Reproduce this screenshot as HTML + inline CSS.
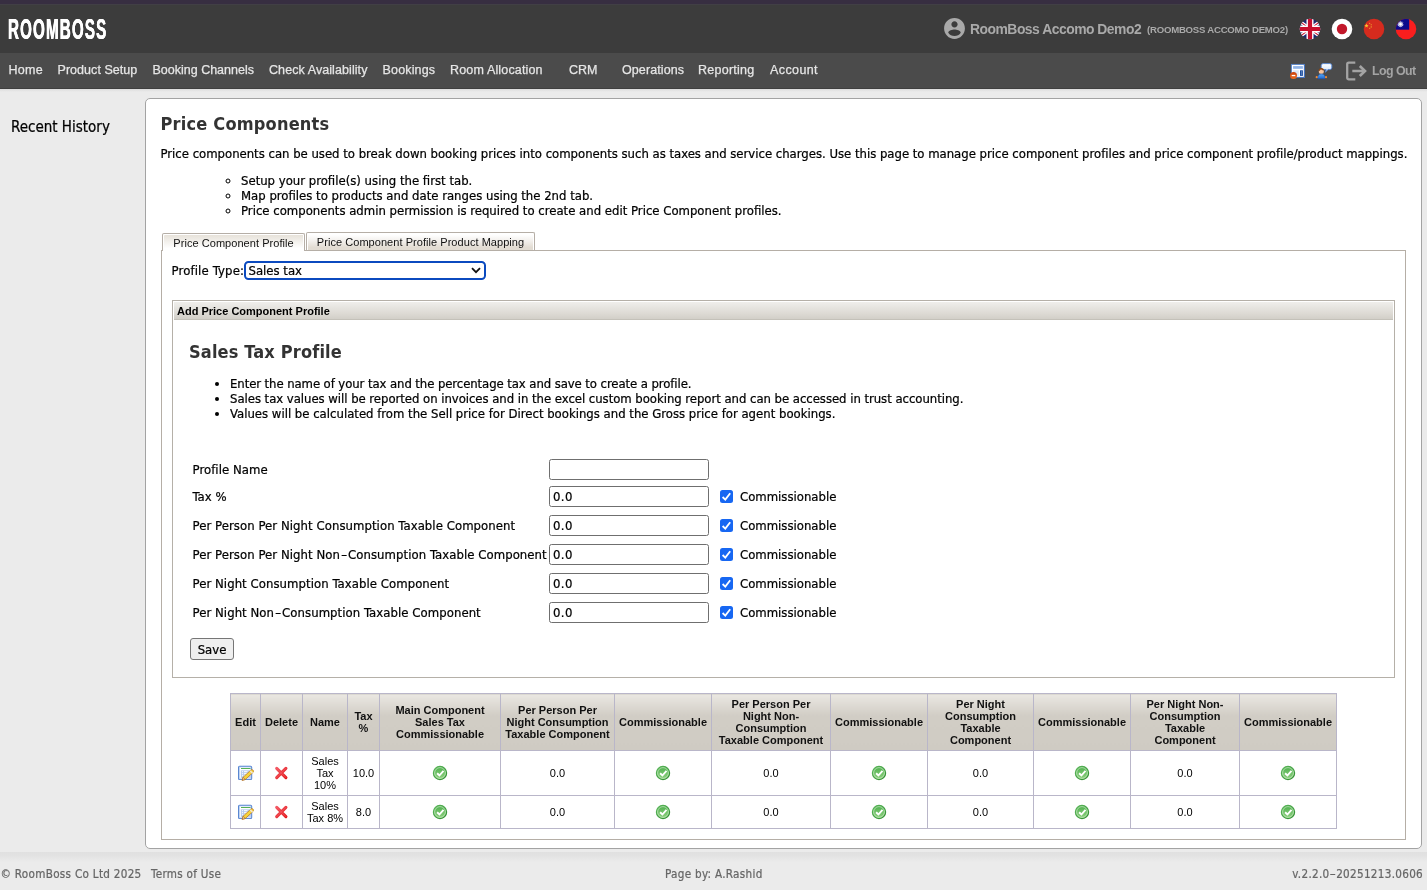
<!DOCTYPE html>
<html lang="en">
<head>
<meta charset="utf-8">
<title>RoomBoss - Price Components</title>
<style>
*{box-sizing:border-box}
html,body{margin:0;padding:0}
body{will-change:transform;width:1427px;height:890px;overflow:hidden;background:#ebebeb;position:relative;
 font-family:"DejaVu Sans Condensed","DejaVu Sans",sans-serif;font-stretch:condensed;font-size:13px;color:#000;line-height:15px;-webkit-text-stroke:.22px}
.lib,#tbl,.tab,#innerhd,#logo,h1,h2{-webkit-text-stroke:0}
.abs{position:absolute}
#strip{left:0;top:0;width:1427px;height:4px;background:#372e41}
#hdr{left:0;top:4px;width:1427px;height:49px;background:#3c3c3c;border-top:1px solid #413f45}
#nav{left:0;top:53px;width:1427px;height:36px;background:#4b4b4b;border-bottom:1px solid #3f3f3f}
#navsh{left:0;top:89px;width:1427px;height:3px;background:linear-gradient(#dcdcdc,#ebebeb)}
#ftsh{left:0;top:852px;width:1427px;height:10px;background:linear-gradient(#e0e0e0,#e2e2e2 35%,#ebebeb)}
.lib{font-family:"Liberation Sans",sans-serif;font-stretch:normal}
#logo{left:8.300px;top:12.800px;font-family:"Liberation Sans",sans-serif;font-stretch:normal;font-weight:bold;font-size:29.500px;line-height:32px;color:#fff;transform-origin:0 0;transform:scaleX(.515);text-shadow:0.35px 0 0 #fff,-0.35px 0 0 #fff;letter-spacing:2.200px;white-space:nowrap}
.navi{top:62px;font-family:"Liberation Sans",sans-serif;font-stretch:normal;font-size:12.5px;line-height:16px;color:#e6e6e6;white-space:nowrap;-webkit-text-stroke:.25px #e6e6e6}
#panel{left:145px;top:98px;width:1277px;height:751px;background:#fff;border:1px solid #a3a3a3;border-radius:5px}

h1,h2{margin:0;font-weight:bold;font-size:18px;line-height:22px;color:#333;white-space:nowrap;letter-spacing:.28px}
.t{white-space:nowrap}
.tab{letter-spacing:.05px;top:233px;height:18px;border:1px solid #b5aea6;border-bottom:none;box-shadow:inset 1px 1px 0 #fff,inset -1px 0 0 #fff;border-radius:2px 2px 0 0;font-family:"Liberation Sans",sans-serif;font-stretch:normal;font-size:11px;line-height:17px;text-align:center;color:#111;white-space:nowrap}
#tabpanel{left:161px;top:250px;width:1245px;height:590px;border:1px solid #b5aea6;background:#fff}
#inner{left:172px;top:300px;width:1223px;height:378px;border:1px solid #b5b0a8;background:#fff}
#innerhd{left:174px;top:302px;width:1219px;height:18px;background:linear-gradient(#efeeeb,#dcd9d3 70%,#d2cfc8);border-bottom:1px solid #c4c1b9;font-family:"Liberation Sans",sans-serif;font-stretch:normal;font-weight:bold;font-size:11px;line-height:18px;padding-left:3px;color:#000}
.lbl{left:192.500px;white-space:nowrap;line-height:16px;letter-spacing:.06px}
.hy{display:inline-block;transform:scaleX(1.500);margin:0 1.900px}
.inp{left:549px;width:160px;height:21px;border:1px solid #6f6f6f;border-radius:2.500px;background:#fff;padding-left:3px;letter-spacing:.4px;line-height:19px;font-size:13px}
.cb{left:720px;width:13px;height:13px;border-radius:2.500px;background:#1767f2}
.cl{left:740px;white-space:nowrap;line-height:16px}

#tbl{left:230px;top:693px;border-collapse:collapse;table-layout:fixed;font-family:"Liberation Sans",sans-serif;font-stretch:normal;font-size:11px;line-height:12px;color:#000}
#tbl th,#tbl td{border:1px solid #b9b6c9;padding:0;text-align:center;vertical-align:middle}
#tbl th{font-weight:bold;background:linear-gradient(#eae7e2,#d1cdc5 38%,#cfcbc3);height:57px;color:#111}
#tbl td{background:#fff}
#tbl svg{display:block;margin:0 auto}
.ft{top:867px;font-size:11.6px;letter-spacing:.3px;line-height:15px;color:#666;white-space:nowrap}
.nocond,.nocond .t,.nocond .lbl,.nocond .cl,.nocond .ft{font-family:"Liberation Sans",sans-serif;font-stretch:normal}
.nocond{font-size:13.200px}
.nocond .lbl{letter-spacing:-.12px}
.nocond .hy{margin:0 .5px}
.nocond h1,.nocond h2{font-family:"Liberation Sans",sans-serif;font-stretch:normal;font-size:19px}
</style>
</head>
<body>
<div id="strip" class="abs"></div>
<div id="hdr" class="abs"></div>
<div id="nav" class="abs"></div>
<div id="navsh" class="abs"></div>
<div id="ftsh" class="abs"></div>
<div id="logo" class="abs">ROOMBOSS</div>

<div class="abs navi" style="left:8.500px;letter-spacing:.3px">Home</div>
<div class="abs navi" style="left:57.500px;letter-spacing:.05px">Product Setup</div>
<div class="abs navi" style="left:152.500px">Booking Channels</div>
<div class="abs navi" style="left:269px;letter-spacing:.08px">Check Availability</div>
<div class="abs navi" style="left:382.500px;letter-spacing:.17px">Bookings</div>
<div class="abs navi" style="left:450px;letter-spacing:.16px">Room Allocation</div>
<div class="abs navi" style="left:569px">CRM</div>
<div class="abs navi" style="left:622px;letter-spacing:.1px">Operations</div>
<div class="abs navi" style="left:698px;letter-spacing:.25px">Reporting</div>
<div class="abs navi" style="left:770px;letter-spacing:.4px">Account</div>


<!-- header right -->
<svg class="abs" style="left:942px;top:16.300px" width="25" height="25" viewBox="0 0 24 24"><path fill="#a9a9a9" d="M12 2C6.48 2 2 6.48 2 12s4.48 10 10 10 10-4.480 10-10S17.520 2 12 2zm0 3c1.660 0 3 1.340 3 3s-1.340 3-3 3-3-1.340-3-3 1.340-3 3-3zm0 14.200c-2.500 0-4.710-1.280-6-3.220.030-1.990 4-3.080 6-3.080 1.990 0 5.970 1.090 6 3.080-1.290 1.940-3.500 3.220-6 3.220z"/></svg>
<div class="abs lib" style="left:970px;top:20px;font-weight:bold;font-size:13.900px;line-height:18px;color:#a9a9a9;letter-spacing:-0.5px;white-space:nowrap">RoomBoss Accomo Demo2</div>
<div class="abs lib" style="left:1147px;top:22px;font-weight:bold;font-size:9.6px;line-height:16px;color:#a9a9a9;letter-spacing:-0.23px;white-space:nowrap">(ROOMBOSS ACCOMO DEMO2)</div>

<svg class="abs" style="left:1299px;top:18px" width="22" height="22" viewBox="0 0 22 22">
 <defs><clipPath id="cf"><circle cx="11" cy="11" r="10.3"/></clipPath></defs>
 <g clip-path="url(#cf)">
  <rect width="22" height="22" fill="#1f2a6e"/>
  <path d="M-4 0L26 22M26 0L-4 22" stroke="#fff" stroke-width="3.400"/>
  <path d="M-4 0L26 22M26 0L-4 22" stroke="#c8102e" stroke-width="1.100"/>
  <path d="M11 0V22M0 11H22" stroke="#fff" stroke-width="7"/>
  <path d="M11 0V22M0 11H22" stroke="#c8102e" stroke-width="4.200"/>
 </g>
</svg>
<svg class="abs" style="left:1331px;top:18px" width="22" height="22" viewBox="0 0 22 22">
 <circle cx="11" cy="11" r="10.3" fill="#fff"/><circle cx="11" cy="11" r="5.200" fill="#c2182b"/>
</svg>
<svg class="abs" style="left:1363px;top:18px" width="22" height="22" viewBox="0 0 22 22">
 <circle cx="11" cy="11" r="10.3" fill="#d52b1e"/>
 <polygon fill="#f4c430" points="3.200,6.300 4.000,8.000 5.800,8.100 4.400,9.300 4.900,11.000 3.300,10.000 1.700,11.000 2.200,9.300 0.800,8.100 2.600,8.000" transform="translate(0.700,0.200) scale(.85)"/>
 <circle cx="6.700" cy="5.300" r=".55" fill="#f4c430"/><circle cx="8.200" cy="6.800" r=".55" fill="#f4c430"/><circle cx="8.200" cy="8.900" r=".55" fill="#f4c430"/><circle cx="6.700" cy="10.300" r=".55" fill="#f4c430"/>
</svg>
<svg class="abs" style="left:1395px;top:18px" width="22" height="22" viewBox="0 0 22 22">
 <defs><clipPath id="ct"><circle cx="11" cy="11" r="10.3"/></clipPath></defs>
 <g clip-path="url(#ct)">
  <rect width="22" height="22" fill="#fa1e1e"/>
  <rect width="14.200" height="11.700" fill="#0a0a8c"/>
  <polygon fill="#fff" points="8.900,6.200 7.528,6.744 8.444,7.900 6.985,7.685 7.200,9.144 6.044,8.228 5.500,9.600 4.956,8.228 3.800,9.144 4.015,7.685 2.556,7.900 3.472,6.744 2.100,6.200 3.472,5.656 2.556,4.500 4.015,4.715 3.800,3.256 4.956,4.172 5.500,2.800 6.044,4.172 7.200,3.256 6.985,4.715 8.444,4.500 7.528,5.656"/><circle cx="5.500" cy="6.200" r="1.900" fill="#fff" stroke="#0a0a8c" stroke-width=".35"/>
 </g>
</svg>

<!-- nav right icons -->
<svg class="abs" style="left:1289px;top:63px" width="17" height="17" viewBox="0 0 17 17">
 <rect x="2.400" y="1.400" width="13" height="13" fill="#fff" stroke="#5584cc" stroke-width=".9"/>
 <path d="M2.400 14.400h13v-13" fill="none" stroke="#3f6fbd" stroke-width=".9"/>
 <rect x="4.100" y="3.100" width="9.800" height="2.700" fill="#8fb3e8"/>
 <rect x="4.100" y="7.300" width="5.800" height="5.600" fill="#dbe6f5"/>
 <rect x="11" y="7.300" width="2.900" height="5.600" fill="#1d4f9e"/>
 <rect x="12.100" y="8" width=".8" height="4.200" fill="#5d86c8"/>
 <circle cx="4.500" cy="12.500" r="3.500" fill="url(#rg)"/>
 <rect x="2.700" y="11.900" width="3.600" height="1.300" fill="#fff"/>
</svg>
<svg class="abs" style="left:1315px;top:62px" width="18" height="18" viewBox="0 0 18 18">
 <path d="M8.200 1.600h6.600a2 2 0 0 1 2 2v2a2 2 0 0 1-2 2h-1.700l-2.800 2.600.9-2.600h-3a2 2 0 0 1-2-2v-2a2 2 0 0 1 2-2z" fill="url(#bg)" stroke="#4f82d2" stroke-width=".9"/>
 <circle cx="6.300" cy="9.600" r="2.500" fill="#f6c39c"/>
 <path d="M3.600 9.400c-.3-2.200 1.200-3.600 2.900-3.500 1.500.1 2.600 1 2.700 2.300-1.400.3-2.700-.3-3.300-.9-.5.900-1.300 1.700-2.300 2.100z" fill="#8a4513"/>
 <path d="M2.700 16.800c-.3-3 1-4.900 3.700-4.900s4 1.900 3.700 4.900z" fill="url(#ug)" stroke="#1c4fa8" stroke-width=".5"/>
 <circle cx="1.700" cy="15.200" r="1.100" fill="#ef8a35"/><circle cx="11" cy="15.200" r="1.100" fill="#ef8a35"/>
</svg>
<svg class="abs" style="left:1345px;top:60px" width="23" height="22" viewBox="0 0 23 22">
 <path d="M10.300 2.600H3.800a1.600 1.600 0 0 0-1.600 1.600v13.600a1.600 1.600 0 0 0 1.600 1.600h6.500" fill="none" stroke="#a4a4a4" stroke-width="2.300"/>
 <path d="M7.300 11H18.500" fill="none" stroke="#a4a4a4" stroke-width="2.500"/>
 <path d="M14.800 6l5.200 5-5.200 5" fill="none" stroke="#a4a4a4" stroke-width="2.600"/>
</svg>
<div class="abs lib" style="left:1372px;top:62.600px;font-weight:bold;font-size:12.400px;line-height:16px;color:#a4a4a4;letter-spacing:-0.55px;white-space:nowrap">Log Out</div>

<div class="abs" style="left:11px;top:117.700px;font-size:15px;line-height:18px;color:#000">Recent History</div>

<div id="panel" class="abs"></div>

<h1 class="abs" style="left:160.500px;top:113px;letter-spacing:.2px">Price Components</h1>
<div class="abs t" style="left:160.500px;top:146px;letter-spacing:-.013px">Price components can be used to break down booking prices into components such as taxes and service charges. Use this page to manage price component profiles and price component profile/product mappings.</div>
<ul class="abs" style="left:201px;top:173px;margin:0;padding:0 0 0 40px;list-style:circle">
 <li class="t">Setup your profile(s) using the first tab.</li>
 <li class="t">Map profiles to products and date ranges using the 2nd tab.</li>
 <li class="t">Price components admin permission is required to create and edit Price Component profiles.</li>
</ul>

<div id="tabpanel" class="abs"></div>
<div class="abs tab" style="left:162px;width:143px;background:linear-gradient(#e5e0d7,#fff 85%);height:18px;top:233px;z-index:2;line-height:19px">Price Component Profile</div>
<div class="abs tab" style="left:306px;width:229px;top:232px;height:18px;background:linear-gradient(#fff 10%,#f1eeea 50%,#e2dcd3 85%);line-height:19px">Price Component Profile Product Mapping</div>

<div class="abs t" style="left:171.500px;top:263px;letter-spacing:.15px">Profile Type:</div>
<div class="abs" style="left:244px;top:261px;width:242px;height:19px;border:2px solid #0b4abf;border-radius:4.500px;background:#fff;padding-left:2.500px;line-height:15px;white-space:nowrap">Sales tax
 <svg class="abs" style="right:3px;top:4px" width="10" height="7" viewBox="0 0 10 7"><path d="M1 1.200l4 4 4-4" fill="none" stroke="#111" stroke-width="1.800"/></svg>
</div>

<div id="inner" class="abs"></div>
<div id="innerhd" class="abs">Add Price Component Profile</div>
<h2 class="abs" style="left:189px;top:341px;letter-spacing:.16px">Sales Tax Profile</h2>
<ul class="abs" style="left:190px;top:376px;margin:0;padding:0 0 0 40px;list-style:disc">
 <li class="t" style="letter-spacing:-.085px">Enter the name of your tax and the percentage tax and save to create a profile.</li>
 <li class="t" style="letter-spacing:-.04px">Sales tax values will be reported on invoices and in the excel custom booking report and can be accessed in trust accounting.</li>
 <li class="t">Values will be calculated from the Sell price for Direct bookings and the Gross price for agent bookings.</li>
</ul>
<div class="abs lbl" style="top:462px">Profile Name</div><div class="abs inp" style="top:459px"></div>
<div class="abs lbl" style="top:489px">Tax %</div><div class="abs inp" style="top:486px">0.0</div>
<div class="abs cb" style="top:490px"><svg width="13" height="13" viewBox="0 0 13 13" style="display:block"><path d="M2.600 7l2.700 2.600 4.900-6.300" fill="none" stroke="#fff" stroke-width="1.800"/></svg></div><div class="abs cl" style="top:489px">Commissionable</div>
<div class="abs lbl" style="top:518px">Per Person Per Night Consumption Taxable Component</div><div class="abs inp" style="top:515px">0.0</div>
<div class="abs cb" style="top:519px"><svg width="13" height="13" viewBox="0 0 13 13" style="display:block"><path d="M2.600 7l2.700 2.600 4.900-6.300" fill="none" stroke="#fff" stroke-width="1.800"/></svg></div><div class="abs cl" style="top:518px">Commissionable</div>
<div class="abs lbl" style="top:547px">Per Person Per Night Non<span class="hy">-</span>Consumption Taxable Component</div><div class="abs inp" style="top:544px">0.0</div>
<div class="abs cb" style="top:548px"><svg width="13" height="13" viewBox="0 0 13 13" style="display:block"><path d="M2.600 7l2.700 2.600 4.900-6.300" fill="none" stroke="#fff" stroke-width="1.800"/></svg></div><div class="abs cl" style="top:547px">Commissionable</div>
<div class="abs lbl" style="top:576px">Per Night Consumption Taxable Component</div><div class="abs inp" style="top:573px">0.0</div>
<div class="abs cb" style="top:577px"><svg width="13" height="13" viewBox="0 0 13 13" style="display:block"><path d="M2.600 7l2.700 2.600 4.900-6.300" fill="none" stroke="#fff" stroke-width="1.800"/></svg></div><div class="abs cl" style="top:576px">Commissionable</div>
<div class="abs lbl" style="top:605px">Per Night Non<span class="hy">-</span>Consumption Taxable Component</div><div class="abs inp" style="top:602px">0.0</div>
<div class="abs cb" style="top:606px"><svg width="13" height="13" viewBox="0 0 13 13" style="display:block"><path d="M2.600 7l2.700 2.600 4.900-6.300" fill="none" stroke="#fff" stroke-width="1.800"/></svg></div><div class="abs cl" style="top:605px">Commissionable</div>
<div class="abs" style="left:190px;top:638px;width:44px;height:22px;border:1px solid #767676;border-radius:3px;background:#efefef;text-align:center;line-height:21.400px;color:#000">Save</div>

<svg class="abs" width="0" height="0" style="left:0;top:0"><defs>
<linearGradient id="tg" x1="0" y1="0" x2="0" y2="1"><stop offset="0" stop-color="#4caf4c"/><stop offset="1" stop-color="#93d283"/></linearGradient>
<linearGradient id="ts" x1="0" y1="0" x2="1" y2="1"><stop offset="0" stop-color="#5cb85c"/><stop offset="1" stop-color="#2e8b2e"/></linearGradient>
<linearGradient id="xg" gradientUnits="userSpaceOnUse" x1="2" y1="2" x2="14" y2="14"><stop offset="0" stop-color="#f45a66"/><stop offset="1" stop-color="#e00d0d"/></linearGradient>
<linearGradient id="rg" x1="0" y1="0" x2="0" y2="1"><stop offset="0" stop-color="#c9400d"/><stop offset="1" stop-color="#ee6a1c"/></linearGradient>
<linearGradient id="bg" x1="0" y1="0" x2="0" y2="1"><stop offset="0" stop-color="#ffffff"/><stop offset="1" stop-color="#cfe0fa"/></linearGradient>
<linearGradient id="ug" x1="0" y1="0" x2="0" y2="1"><stop offset="0" stop-color="#58a8f2"/><stop offset="1" stop-color="#1f66d0"/></linearGradient>
</defs></svg>
<table id="tbl" class="abs"><colgroup><col style="width:30px"><col style="width:42px"><col style="width:45px"><col style="width:32px"><col style="width:121px"><col style="width:114px"><col style="width:97px"><col style="width:119px"><col style="width:97px"><col style="width:106px"><col style="width:97px"><col style="width:109px"><col style="width:97px"></colgroup>
<tr><th>Edit</th><th>Delete</th><th>Name</th><th>Tax<br>%</th><th>Main Component<br>Sales Tax<br>Commissionable</th><th>Per Person Per<br>Night Consumption<br>Taxable Component</th><th>Commissionable</th><th>Per Person Per<br>Night Non-<br>Consumption<br>Taxable Component</th><th>Commissionable</th><th>Per Night<br>Consumption<br>Taxable<br>Component</th><th>Commissionable</th><th>Per Night Non-<br>Consumption<br>Taxable<br>Component</th><th>Commissionable</th></tr>
<tr style="height:45px"><td><svg width="16" height="16" viewBox="0 0 16 16"><rect x=".6" y="1.300" width="13" height="13.200" rx="1" fill="#fff" stroke="#4f7fcf" stroke-width="1.200"/><rect x="1.300" y="2" width="11.600" height="11.800" fill="none" stroke="#b6cdf0" stroke-width=".8"/><path d="M3 3.500h9.500" stroke="#55b055" stroke-width="1"/><rect x="2.800" y="5.300" width="10" height="7.600" fill="#b7ccee"/><path d="M4 6.700h1M6 6.700h3.500M4 8.700h1M6 8.700h3.500M4 10.700h1M6 10.700h3.500" stroke="#fff" stroke-width="1"/><path d="M4.200 15.300l.9-3 8-7.400a1.300 1.300 0 0 1 1.800.1l.4.500a1.300 1.300 0 0 1-.1 1.800l-8 7.300z" fill="#f6d43a" stroke="#c27a1e" stroke-width=".8"/><path d="M12.200 5.700l2.300 2.500" stroke="#f4e6d0" stroke-width="1.600"/><path d="M4.200 15.300l.9-3 2.100 2.100z" fill="#f3d9b5" stroke="#9a5a16" stroke-width=".6"/></svg></td><td><svg width="16" height="16" viewBox="0 0 16 16"><path d="M2.700 3.400l9.200 9.200M11.900 3.400L2.700 12.600" fill="none" stroke="url(#xg)" stroke-width="3.100" stroke-linecap="round"/><path d="M2.700 3.400l9.200 9.200M11.900 3.400L2.700 12.600" fill="none" stroke="#f56a72" stroke-width="1" stroke-linecap="round" opacity=".55"/></svg></td><td>Sales<br>Tax<br>10%</td><td>10.0</td><td><svg width="16" height="16" viewBox="0 0 16 16"><circle cx="8" cy="8" r="6.600" fill="url(#tg)" stroke="url(#ts)" stroke-width="1.200"/><circle cx="8" cy="8" r="5.400" fill="none" stroke="#c9ebc4" stroke-width=".7"/><path d="M5.100 8.300l2.300 2.200 4.100-4.700" fill="none" stroke="#fff" stroke-width="1.900"/></svg></td><td>0.0</td><td><svg width="16" height="16" viewBox="0 0 16 16"><circle cx="8" cy="8" r="6.600" fill="url(#tg)" stroke="url(#ts)" stroke-width="1.200"/><circle cx="8" cy="8" r="5.400" fill="none" stroke="#c9ebc4" stroke-width=".7"/><path d="M5.100 8.300l2.300 2.200 4.100-4.700" fill="none" stroke="#fff" stroke-width="1.900"/></svg></td><td>0.0</td><td><svg width="16" height="16" viewBox="0 0 16 16"><circle cx="8" cy="8" r="6.600" fill="url(#tg)" stroke="url(#ts)" stroke-width="1.200"/><circle cx="8" cy="8" r="5.400" fill="none" stroke="#c9ebc4" stroke-width=".7"/><path d="M5.100 8.300l2.300 2.200 4.100-4.700" fill="none" stroke="#fff" stroke-width="1.900"/></svg></td><td>0.0</td><td><svg width="16" height="16" viewBox="0 0 16 16"><circle cx="8" cy="8" r="6.600" fill="url(#tg)" stroke="url(#ts)" stroke-width="1.200"/><circle cx="8" cy="8" r="5.400" fill="none" stroke="#c9ebc4" stroke-width=".7"/><path d="M5.100 8.300l2.300 2.200 4.100-4.700" fill="none" stroke="#fff" stroke-width="1.900"/></svg></td><td>0.0</td><td><svg width="16" height="16" viewBox="0 0 16 16"><circle cx="8" cy="8" r="6.600" fill="url(#tg)" stroke="url(#ts)" stroke-width="1.200"/><circle cx="8" cy="8" r="5.400" fill="none" stroke="#c9ebc4" stroke-width=".7"/><path d="M5.100 8.300l2.300 2.200 4.100-4.700" fill="none" stroke="#fff" stroke-width="1.900"/></svg></td></tr>
<tr style="height:33px"><td><svg width="16" height="16" viewBox="0 0 16 16"><rect x=".6" y="1.300" width="13" height="13.200" rx="1" fill="#fff" stroke="#4f7fcf" stroke-width="1.200"/><rect x="1.300" y="2" width="11.600" height="11.800" fill="none" stroke="#b6cdf0" stroke-width=".8"/><path d="M3 3.500h9.500" stroke="#55b055" stroke-width="1"/><rect x="2.800" y="5.300" width="10" height="7.600" fill="#b7ccee"/><path d="M4 6.700h1M6 6.700h3.500M4 8.700h1M6 8.700h3.500M4 10.700h1M6 10.700h3.500" stroke="#fff" stroke-width="1"/><path d="M4.200 15.300l.9-3 8-7.400a1.300 1.300 0 0 1 1.800.1l.4.500a1.300 1.300 0 0 1-.1 1.800l-8 7.300z" fill="#f6d43a" stroke="#c27a1e" stroke-width=".8"/><path d="M12.200 5.700l2.300 2.500" stroke="#f4e6d0" stroke-width="1.600"/><path d="M4.200 15.300l.9-3 2.100 2.100z" fill="#f3d9b5" stroke="#9a5a16" stroke-width=".6"/></svg></td><td><svg width="16" height="16" viewBox="0 0 16 16"><path d="M2.700 3.400l9.200 9.200M11.900 3.400L2.700 12.600" fill="none" stroke="url(#xg)" stroke-width="3.100" stroke-linecap="round"/><path d="M2.700 3.400l9.200 9.200M11.900 3.400L2.700 12.600" fill="none" stroke="#f56a72" stroke-width="1" stroke-linecap="round" opacity=".55"/></svg></td><td>Sales<br>Tax 8%</td><td>8.0</td><td><svg width="16" height="16" viewBox="0 0 16 16"><circle cx="8" cy="8" r="6.600" fill="url(#tg)" stroke="url(#ts)" stroke-width="1.200"/><circle cx="8" cy="8" r="5.400" fill="none" stroke="#c9ebc4" stroke-width=".7"/><path d="M5.100 8.300l2.300 2.200 4.100-4.700" fill="none" stroke="#fff" stroke-width="1.900"/></svg></td><td>0.0</td><td><svg width="16" height="16" viewBox="0 0 16 16"><circle cx="8" cy="8" r="6.600" fill="url(#tg)" stroke="url(#ts)" stroke-width="1.200"/><circle cx="8" cy="8" r="5.400" fill="none" stroke="#c9ebc4" stroke-width=".7"/><path d="M5.100 8.300l2.300 2.200 4.100-4.700" fill="none" stroke="#fff" stroke-width="1.900"/></svg></td><td>0.0</td><td><svg width="16" height="16" viewBox="0 0 16 16"><circle cx="8" cy="8" r="6.600" fill="url(#tg)" stroke="url(#ts)" stroke-width="1.200"/><circle cx="8" cy="8" r="5.400" fill="none" stroke="#c9ebc4" stroke-width=".7"/><path d="M5.100 8.300l2.300 2.200 4.100-4.700" fill="none" stroke="#fff" stroke-width="1.900"/></svg></td><td>0.0</td><td><svg width="16" height="16" viewBox="0 0 16 16"><circle cx="8" cy="8" r="6.600" fill="url(#tg)" stroke="url(#ts)" stroke-width="1.200"/><circle cx="8" cy="8" r="5.400" fill="none" stroke="#c9ebc4" stroke-width=".7"/><path d="M5.100 8.300l2.300 2.200 4.100-4.700" fill="none" stroke="#fff" stroke-width="1.900"/></svg></td><td>0.0</td><td><svg width="16" height="16" viewBox="0 0 16 16"><circle cx="8" cy="8" r="6.600" fill="url(#tg)" stroke="url(#ts)" stroke-width="1.200"/><circle cx="8" cy="8" r="5.400" fill="none" stroke="#c9ebc4" stroke-width=".7"/><path d="M5.100 8.300l2.300 2.200 4.100-4.700" fill="none" stroke="#fff" stroke-width="1.900"/></svg></td></tr>
</table>

<div class="abs ft" style="left:0.500px">© RoomBoss Co Ltd 2025</div>
<div class="abs ft" style="left:151px">Terms of Use</div>
<div class="abs ft" style="left:665px">Page by: A.Rashid</div>
<div class="abs ft" style="right:4px">v.2.2.0<span class="hy" style="transform:scaleX(1.700);margin:0 1.300px">-</span>20251213.0606</div>
<script>
(function(){try{var a=document.createElement('span');a.style.cssText='position:absolute;visibility:hidden;white-space:nowrap;font:100px "DejaVu Sans"';a.textContent='mmmmmmmmmmiiiiiiwwww';document.body.appendChild(a);var w1=a.getBoundingClientRect().width;a.style.fontStretch='condensed';var w2=a.getBoundingClientRect().width;a.remove();if(w2>=w1-1){document.body.className+=' nocond';}}catch(e){}})();
</script>
</body>
</html>
